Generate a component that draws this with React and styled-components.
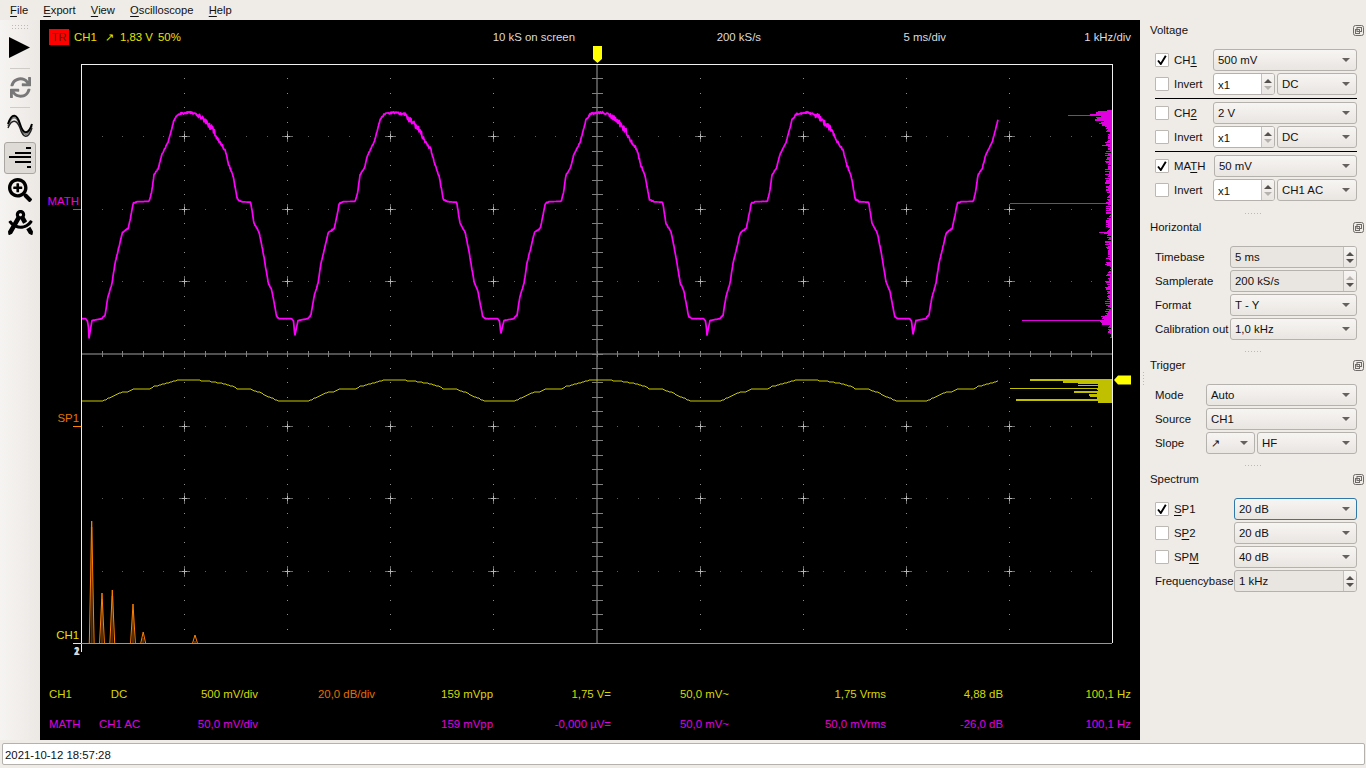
import React from "react";
import styled, { createGlobalStyle } from "styled-components";
import { FaSync, FaSearchPlus, FaDraftingCompass } from "react-icons/fa";

const GlobalStyle = createGlobalStyle`
  html, body { margin: 0; height: 100%; overflow: hidden; }
  body { font-family: "Liberation Sans", Arial, sans-serif; font-size: 11.4px; color: #111; background: #efebe7; }
  u { text-underline-offset: 2px; }
`;

/* ---------- trace data ---------- */

// one mains period, dip to dip: [dx, y] in page pixels
const PERIOD = [
  [3, 320.5], [12.7, 318.7], [16, 315], [19, 296.7], [23, 283.3], [26, 263.3], [30, 246.7],
  [33.3, 232.7], [39.3, 228.3], [41.7, 216.7], [44.3, 203.3], [47.7, 201.7], [60.3, 201.3],
  [62.7, 191.7], [65, 175], [69.3, 168.3], [72.7, 155], [79.3, 141.7], [85, 120], [89.3, 114],
  [101, 112.3], [109.3, 115], [116, 120.7], [124.3, 130], [129.3, 140], [136, 150],
  [139.3, 163.3], [144.3, 176.7], [148.3, 199.3], [152.7, 201.7], [161.7, 202.3], [165, 223.3],
  [170.3, 232.7], [174.3, 253.3], [179.3, 283.3], [182.7, 290], [187.7, 316.7], [191, 318.7],
  [202.7, 318.7], [204.5, 321],
];
const DIPS = [331, 338, 335, 333, 335, 334];
const START_X = 89;
const STEP = 206;

function rng(seed) {
  let s = seed;
  return () => {
    s = (s * 16807) % 2147483647;
    return s / 2147483647 - 0.5;
  };
}

function baseY(dx, dip) {
  const pts = [[0, dip], ...PERIOD, [STEP, dip]];
  for (let i = 1; i < pts.length; i++) {
    if (dx <= pts[i][0]) {
      const [x0, y0] = pts[i - 1];
      const [x1, y1] = pts[i];
      return y0 + ((y1 - y0) * (dx - x0)) / (x1 - x0);
    }
  }
  return dip;
}

function traceAt(x, withDip) {
  const n = Math.floor((x - START_X) / STEP);
  const dx = x - START_X - n * STEP;
  const dip = withDip ? DIPS[Math.max(n, -1) + 1] : 319;
  return baseY(dx, dip);
}

function buildMath() {
  const rand = rng(4711);
  const pts = [];
  for (let x = 81; x <= 998; x += 0.5) {
    const dx = (x - START_X + STEP * 2) % STEP;
    let amp = 1.2;
    if (dx > 108 && dx < 128) amp = 6;
    else if (dx >= 128 && dx < 142) amp = 3;
    else if (dx > 85 && dx <= 108) amp = 2;
    else if ((dx > 47 && dx < 60) || (dx > 152 && dx < 162) || dx < 14 || dx > 190) amp = 0.15;
    pts.push(`${x},${(traceAt(x, true) + rand() * amp).toFixed(1)}`);
  }
  return pts.join(" ");
}

function buildCh1() {
  const pts = [];
  for (let x = 81; x <= 998; x += 1) {
    const y = 380 + (traceAt(x, false) - 112) * 0.1;
    pts.push(`${x},${Math.round(y)}`);
  }
  return pts.join(" ");
}

function buildMathHistogram() {
  const rand = rng(99);
  let d = "";
  const long = { 115: 1068, 203: 1010, 320: 1022, 232: 1099, 233: 1104, 145: 1102, 113: 1096, 114: 1090, 117: 1096, 321: 1100 };
  for (let y = 110; y <= 337; y++) {
    let len = 1 + (rand() + 0.5) * 6;
    if (y < 126) len += 4 + (rand() + 0.5) * 10;
    if (y > 315 && y < 325) len += 5;
    if (y > 325) len = 1 + (rand() + 0.5) * 3;
    const end = long[y] || 1112 - len;
    d += `M${end.toFixed(0)} ${y}H1112`;
  }
  return d;
}

const CH1_HIST = [
  [379, 1030], [380, 1030], [381, 1063], [382, 1063], [383, 1078], [384, 1098], [385, 1078],
  [386, 1098], [387, 1098], [388, 1010], [389, 1097], [390, 1098], [391, 1074], [392, 1074],
  [393, 1097], [394, 1089], [395, 1089], [396, 1090], [397, 1097], [398, 1097], [399, 1016],
  [400, 1016], [401, 1098], [402, 1098],
];

const SPECTRUM = [[91.7, 521], [102, 593], [112.3, 590], [133, 604], [143.2, 632], [195, 635]];

const MATH_POINTS = buildMath();
const CH1_POINTS = buildCh1();
const MATH_HIST = buildMathHistogram();

function graticule() {
  const dx = 103.1;
  const dy = 72.375;
  let cross = "";
  let crossCore = "";
  let vDots = "";
  let hDots = "";
  for (let i = 1; i < 10; i++) {
    const x = Math.round(81 + i * dx);
    for (let j = 1; j < 8; j++) {
      const y = Math.round(64 + j * dy);
      if (i !== 5 && j !== 4) {
        cross += `M${x - 5} ${y}h11M${x} ${y - 5}v11`;
        crossCore += `M${x - 2} ${y}h5M${x} ${y - 2}v5`;
      }
    }
    if (i !== 5) {
      for (let k = 1; k < 40; k++) {
        if (k % 5) vDots += `M${x} ${Math.round(64 + (k * dy) / 5)}h1`;
      }
    }
  }
  for (let j = 1; j < 8; j++) {
    if (j === 4) continue;
    const y = Math.round(64 + j * dy);
    for (let k = 1; k < 50; k++) {
      if (k % 5) hDots += `M${Math.round(81 + (k * dx) / 5)} ${y}h1`;
    }
  }
  let ticks = "";
  for (let k = 1; k < 50; k++) ticks += `M${Math.round(81 + (k * dx) / 5)} 351v6`;
  for (let k = 1; k < 40; k++) ticks += `M592 ${Math.round(64 + (k * dy) / 5)}h11`;
  return { cross, crossCore, vDots, hDots, ticks };
}
const GRID = graticule();

/* ---------- layout ---------- */

const Window = styled.div`
  display: flex;
  flex-direction: column;
  height: 100vh;
  background: #efebe7;
`;

const MenuBar = styled.div`
  display: flex;
  align-items: center;
  height: 20px;
  padding-left: 2.5px;
  flex: none;
  font-size: 11.2px;
`;

const MenuItem = styled.div`
  padding: 0 7.6px;
  line-height: 20px;
`;

const Main = styled.div`
  display: flex;
  flex: 1;
  min-height: 0;
`;

const ToolBar = styled.div`
  width: 40px;
  flex: none;
  box-sizing: border-box;
  padding-top: 5px;
  display: flex;
  flex-direction: column;
  align-items: center;
  background: linear-gradient(90deg, #f6f4f2, #ece8e4);
`;

const Grip = styled.div`
  width: 16px;
  height: 4px;
  margin-bottom: 3px;
  background:
    repeating-linear-gradient(90deg, #bdb9b5 0 1px, transparent 1px 3px) 0 0 / 100% 1px no-repeat,
    repeating-linear-gradient(90deg, #bdb9b5 0 1px, transparent 1px 3px) 0 3px / 100% 1px no-repeat;
`;

const ToolSeparator = styled.div`
  width: 20px;
  height: 1px;
  margin: 4px 0 2px;
  background: #cfcbc7;
`;

const ToolButton = styled.div`
  width: 32px;
  height: 32px;
  box-sizing: border-box;
  display: flex;
  align-items: center;
  justify-content: center;
  border-radius: 3px;
  color: ${(p) => p.$color || "#000"};
  border: 1px solid ${(p) => (p.$active ? "#aaa6a2" : "transparent")};
  background: ${(p) => (p.$active ? "#dedad6" : "transparent")};
`;

const Screen = styled.div`
  flex: 1;
  min-width: 0;
  display: flex;
  flex-direction: column;
  background: #000;
`;

const ScreenHeader = styled.div`
  display: grid;
  grid-template-columns: 1fr 200px 186px 185px 185px;
  align-items: center;
  height: 26px;
  box-sizing: border-box;
  padding: 9px 9px 1px;
  color: #dcdcdc;
  & > span { text-align: right; }
`;

const TriggerInfo = styled.div`
  display: flex;
  align-items: center;
  color: #e4e400;
`;

const TriggerBadge = styled.div`
  width: 20px;
  height: 16px;
  margin-right: 5px;
  background: #ff0000;
  color: #5a2000;
  text-align: center;
  line-height: 16px;
`;

const InfoCell = styled.span`
  width: ${(p) => p.$w}px;
  text-align: left;
`;

const Plot = styled.div`
  position: relative;
  height: 618px;
  flex: none;
`;

const PlotSvg = styled.svg`
  display: block;
  width: 1100px;
  height: 618px;
`;

const LevelLabel = styled.div`
  position: absolute;
  left: 0;
  width: 39px;
  top: ${(p) => p.$y - 46 - 7}px;
  text-align: right;
  line-height: 14px;
  color: ${(p) => p.$color};
`;

const ChannelMark = styled.div`
  position: absolute;
  left: 34px;
  top: 600px;
  line-height: 12px;
  font-size: 10px;
  font-weight: bold;
  color: #ddd;
`;

const Readout = styled.div`
  padding-top: 15px;
  display: flex;
  flex-direction: column;
`;

const ReadoutRow = styled.div`
  display: grid;
  grid-template-columns: 50px 40px 119px 117px 118px 118px 118px 157px 117px 128px;
  height: 30px;
  align-items: center;
  padding-left: 9px;
  color: ${(p) => p.$color};
  white-space: nowrap;
`;

const Cell = styled.span`
  text-align: ${(p) => p.$align || "right"};
  color: ${(p) => p.$color || "inherit"};
`;

/* ---------- side panel ---------- */

const SidePanel = styled.div`
  position: relative;
  width: 226px;
  flex: none;
`;

const SideGrip = styled.div`
  position: absolute;
  left: 3px;
  top: 352px;
  width: 1px;
  height: 15px;
  background: repeating-linear-gradient(180deg, #bdb9b5 0 1px, transparent 1px 3px);
`;

const Dock = styled.section`
  padding-bottom: 8px;
`;

const DockTitle = styled.div`
  display: flex;
  align-items: center;
  justify-content: space-between;
  height: 20px;
  padding: 0 2px 0 10px;
`;

const DockBody = styled.div`
  display: flex;
  flex-direction: column;
  gap: 2px;
  padding: 9px 9px 0 15px;
`;

const Row = styled.div`
  display: grid;
  grid-template-columns: ${(p) => p.$label}px 1fr;
  align-items: center;
  height: 22px;
`;

const Pair = styled.div`
  display: flex;
  gap: 2px;
  min-width: 0;
`;

const Rule = styled.div`
  height: 1px;
  margin: 1px 0;
  background: #000;
`;

const Splitter = styled.div`
  height: ${(p) => p.$h}px;
  display: flex;
  align-items: center;
  justify-content: center;
  &::before {
    content: "";
    width: 17px;
    height: 1px;
    background: repeating-linear-gradient(90deg, #bdb9b5 0 1px, transparent 1px 3px);
  }
`;

const CheckRow = styled.label`
  display: flex;
  align-items: center;
  gap: 5px;
`;

const CheckBox = styled.span`
  width: 14px;
  height: 14px;
  box-sizing: border-box;
  display: flex;
  align-items: center;
  justify-content: center;
  background: #fff;
  border: 1px solid #bcb8b4;
  border-radius: 1px;
`;

const ComboBox = styled.div`
  position: relative;
  flex: ${(p) => (p.$w ? "none" : "1")};
  width: ${(p) => (p.$w ? `${p.$w}px` : "auto")};
  height: 22px;
  box-sizing: border-box;
  padding-left: 4px;
  line-height: 20px;
  border: 1px solid ${(p) => (p.$focus ? "#2f78a8" : "#b5b1ad")};
  border-radius: 3px;
  background: linear-gradient(180deg, #f7f5f3, #e9e5e1);
  &::after {
    content: "";
    position: absolute;
    right: 6px;
    top: 8px;
    border-style: solid;
    border-width: 4px 4.5px 0;
    border-color: #65615e transparent transparent;
  }
`;

const SpinBox = styled.div`
  display: flex;
  flex: ${(p) => (p.$w ? "none" : "1")};
  width: ${(p) => (p.$w ? `${p.$w}px` : "auto")};
  height: 22px;
  box-sizing: border-box;
  border: 1px solid #b5b1ad;
  border-radius: 3px;
  background: ${(p) => (p.$plain ? "#fff" : "#e9e5e1")};
  overflow: hidden;
`;

const SpinText = styled.div`
  flex: 1;
  padding-left: 4px;
  line-height: ${(p) => (p.$plain ? 22 : 20)}px;
`;

const SpinArrows = styled.div`
  width: 13px;
  flex: none;
  box-sizing: border-box;
  display: flex;
  flex-direction: column;
  align-items: center;
  justify-content: center;
  gap: 3px;
  border-left: 1px solid #c4c0bc;
  background: linear-gradient(180deg, #f7f5f3, #e9e5e1);
`;

const SpinArrow = styled.span`
  border-style: solid;
  border-width: ${(p) => (p.$up ? "0 4px 4px" : "4px 4px 0")};
  border-color: ${(p) => (p.$dim ? "#b5b1ad" : "#55514e")};
  border-left-color: transparent;
  border-right-color: transparent;
`;

const StatusBar = styled.div`
  height: 28px;
  flex: none;
  box-sizing: border-box;
  padding: 3px 1px 3px 2px;
`;

const StatusField = styled.div`
  height: 22px;
  box-sizing: border-box;
  padding-left: 2px;
  line-height: 22px;
  background: #fff;
  border: 1px solid #b5b1ad;
  border-radius: 2px;
`;

/* ---------- icons ---------- */

const CheckMark = () => (
  <svg width="10" height="10" viewBox="0 0 10 10">
    <path d="M1 5.5 L3.8 9 L8.8 0.8" fill="none" stroke="#000" strokeWidth="1.9" />
  </svg>
);

const FloatIcon = () => (
  <svg width="11" height="11" viewBox="0 0 11 11" fill="none" stroke="#6f6b68">
    <rect x="0.5" y="0.5" width="10" height="10" rx="2" />
    <rect x="4" y="2.5" width="4.5" height="4" />
    <rect x="2.5" y="4.5" width="4" height="4" />
  </svg>
);

const PlayIcon = () => (
  <svg width="22" height="22" viewBox="0 0 22 22">
    <path d="M0 0 L21 10.5 L0 21 Z" fill="#000" />
  </svg>
);

const WaveIcon = () => (
  <svg width="26" height="26" viewBox="0 0 26 26" fill="none">
    <path d="M1 13 C5 1 10 3 13 13 C16 23 21 25 25 13" stroke="#777" strokeWidth="1.6" />
    <path d="M1 11 C5 -1 10 1 13 11 C16 21 21 23 25 11" stroke="#000" strokeWidth="2" />
    <path d="M1 15 C5 5 10 7 13 15 C16 25 21 27 25 15" stroke="#222" strokeWidth="1.4" />
  </svg>
);

const HistogramIcon = () => (
  <svg width="24" height="22" viewBox="0 0 24 22" fill="#000">
    <rect x="18" y="0" width="5" height="2" />
    <rect x="7" y="5" width="16" height="2" />
    <rect x="1" y="9" width="22" height="2" />
    <rect x="7" y="14" width="16" height="2" />
    <rect x="19" y="19" width="4" height="2" />
  </svg>
);

/* ---------- small parts ---------- */

const Combo = ({ children, w, focus }) => (
  <ComboBox $w={w} $focus={focus}>{children}</ComboBox>
);

const Spin = ({ children, w, plain, upDim, downDim }) => (
  <SpinBox $w={w} $plain={plain}>
    <SpinText $plain={plain}>{children}</SpinText>
    <SpinArrows>
      <SpinArrow $up $dim={upDim} />
      <SpinArrow $dim={downDim} />
    </SpinArrows>
  </SpinBox>
);

const Check = ({ on, children }) => (
  <CheckRow>
    <CheckBox>{on && <CheckMark />}</CheckBox>
    <span>{children}</span>
  </CheckRow>
);

const Section = ({ title, children, gap = 7, last }) => (
  <>
    <Dock>
      <DockTitle>
        <span>{title}</span>
        <FloatIcon />
      </DockTitle>
      <DockBody>{children}</DockBody>
    </Dock>
    {!last && <Splitter $h={gap} />}
  </>
);

const ChannelRows = ({ name, value, coupling, label = 58 }) => (
  <>
    <Row $label={label}>
      <Check on={name.on}>{name.text}</Check>
      <Combo>{value}</Combo>
    </Row>
    <Row $label={58}>
      <Check>Invert</Check>
      <Pair>
        <Spin w={62} plain downDim>x1</Spin>
        <Combo>{coupling}</Combo>
      </Pair>
    </Row>
  </>
);

const ScopePlot = () => (
  <Plot>
    <PlotSvg viewBox="40 46 1100 618">
      <g shapeRendering="crispEdges" fill="none">
        <path d={GRID.hDots} stroke="#5e5e5e" />
        <path d={GRID.vDots} stroke="#8e8e8e" />
        <path d={GRID.cross} stroke="#6a6a6a" />
        <path d={GRID.crossCore} stroke="#b4b4b4" />
        <path d="M81 353.5H1112" stroke="#505050" strokeWidth="2" />
        <path d="M596.5 64V643" stroke="#505050" strokeWidth="2" />
        <path d={GRID.ticks} stroke="#808080" />
        <path d={MATH_HIST} stroke="#e000e0" />
        {CH1_HIST.map(([y, x]) => (
          <path key={y} d={`M${x} ${y}H1112`} stroke="#c0c000" />
        ))}
      </g>
      <polyline points={MATH_POINTS} fill="none" stroke="#ff00ff" strokeWidth="1.7" strokeLinejoin="round" />
      <polyline points={CH1_POINTS} fill="none" stroke="#c8c800" strokeWidth="1" />
      <path d="M81.5 652V64.5H1112.5V643" fill="none" stroke="#f0f0f0" shapeRendering="crispEdges" />
      <g shapeRendering="crispEdges">
        <path d="M73 209H81" stroke="#ff00ff" />
        <path d="M73 426H81" stroke="#ff8000" />
        <path d="M73 643H81" stroke="#ffff00" />
        <path d="M81 643.5H1112" stroke="#ff8000" />
      </g>
      {SPECTRUM.map(([x, top]) => (
        <g key={x} fill="none">
          <path d={`M${x} 643 V${top + 6}`} stroke="#5a2d00" strokeWidth="2" />
          <path d={`M${x - 2.4} 643 L${x} ${top} L${x + 2.4} 643`} stroke="#ff8000" strokeWidth="1" />
        </g>
      ))}
      <path d="M593 46H602V59L597.5 63L593 59Z" fill="#ffff00" />
      <path d="M1114 380L1118 375.5H1131V384.5H1118Z" fill="#ffff00" />
    </PlotSvg>
    <LevelLabel $y={201} $color="#e800e8">MATH</LevelLabel>
    <LevelLabel $y={418} $color="#e87400">SP1</LevelLabel>
    <LevelLabel $y={635} $color="#e4e400">CH1</LevelLabel>
    <ChannelMark>2</ChannelMark>
    <ChannelMark>1</ChannelMark>
  </Plot>
);

export default function App() {
  return (
    <Window>
      <GlobalStyle />
      <MenuBar>
        <MenuItem><u>F</u>ile</MenuItem>
        <MenuItem><u>E</u>xport</MenuItem>
        <MenuItem><u>V</u>iew</MenuItem>
        <MenuItem><u>O</u>scilloscope</MenuItem>
        <MenuItem><u>H</u>elp</MenuItem>
      </MenuBar>
      <Main>
        <ToolBar>
          <Grip />
          <ToolButton><PlayIcon /></ToolButton>
          <ToolSeparator />
          <ToolButton $color="#787878"><FaSync size={21} /></ToolButton>
          <ToolSeparator />
          <ToolButton><WaveIcon /></ToolButton>
          <ToolButton $active><HistogramIcon /></ToolButton>
          <ToolButton><FaSearchPlus size={24} /></ToolButton>
          <ToolButton><FaDraftingCompass size={25} /></ToolButton>
        </ToolBar>

        <Screen>
          <ScreenHeader>
            <TriggerInfo>
              <TriggerBadge>TR</TriggerBadge>
              <InfoCell $w={31}>CH1</InfoCell>
              <InfoCell $w={15}>↗</InfoCell>
              <InfoCell $w={38}>1,83 V</InfoCell>
              <InfoCell $w={30}>50%</InfoCell>
            </TriggerInfo>
            <span>10 kS on screen</span>
            <span>200 kS/s</span>
            <span>5 ms/div</span>
            <span>1 kHz/div</span>
          </ScreenHeader>
          <ScopePlot />
          <Readout>
            <ReadoutRow $color="#d8d800">
              <Cell $align="left">CH1</Cell>
              <Cell $align="center">DC</Cell>
              <Cell>500 mV/div</Cell>
              <Cell $color="#e07000">20,0 dB/div</Cell>
              <Cell>159 mVpp</Cell>
              <Cell>1,75 V=</Cell>
              <Cell>50,0 mV~</Cell>
              <Cell>1,75 Vrms</Cell>
              <Cell>4,88 dB</Cell>
              <Cell>100,1 Hz</Cell>
            </ReadoutRow>
            <ReadoutRow $color="#e000e0">
              <Cell $align="left">MATH</Cell>
              <Cell $align="center">CH1 AC</Cell>
              <Cell>50,0 mV/div</Cell>
              <Cell />
              <Cell>159 mVpp</Cell>
              <Cell>-0,000 µV=</Cell>
              <Cell>50,0 mV~</Cell>
              <Cell>50,0 mVrms</Cell>
              <Cell>-26,0 dB</Cell>
              <Cell>100,1 Hz</Cell>
            </ReadoutRow>
          </Readout>
        </Screen>

        <SidePanel>
          <SideGrip />
          <Section title="Voltage" gap={8}>
            <ChannelRows name={{ on: true, text: <>CH<u>1</u></> }} value="500 mV" coupling="DC" />
            <Rule />
            <ChannelRows name={{ on: false, text: <>CH<u>2</u></> }} value="2 V" coupling="DC" />
            <Rule />
            <ChannelRows name={{ on: true, text: <>MA<u>T</u>H</> }} value="50 mV" coupling="CH1 AC" label={59} />
          </Section>
          <Section title="Horizontal">
            <Row $label={75}><span>Timebase</span><Spin>5 ms</Spin></Row>
            <Row $label={75}><span>Samplerate</span><Spin upDim>200 kS/s</Spin></Row>
            <Row $label={75}><span>Format</span><Combo>T - Y</Combo></Row>
            <Row $label={75}><span>Calibration out</span><Combo>1,0 kHz</Combo></Row>
          </Section>
          <Section title="Trigger">
            <Row $label={51}><span>Mode</span><Combo>Auto</Combo></Row>
            <Row $label={51}><span>Source</span><Combo>CH1</Combo></Row>
            <Row $label={51}>
              <span>Slope</span>
              <Pair>
                <Combo w={49}>↗</Combo>
                <Combo>HF</Combo>
              </Pair>
            </Row>
          </Section>
          <Section title="Spectrum" last>
            <Row $label={79}><Check on><u>S</u>P1</Check><Combo focus>20 dB</Combo></Row>
            <Row $label={79}><Check>S<u>P</u>2</Check><Combo>20 dB</Combo></Row>
            <Row $label={79}><Check>SP<u>M</u></Check><Combo>40 dB</Combo></Row>
            <Row $label={79}><span>Frequencybase</span><Spin>1 kHz</Spin></Row>
          </Section>
        </SidePanel>
      </Main>
      <StatusBar>
        <StatusField>2021-10-12 18:57:28</StatusField>
      </StatusBar>
    </Window>
  );
}
